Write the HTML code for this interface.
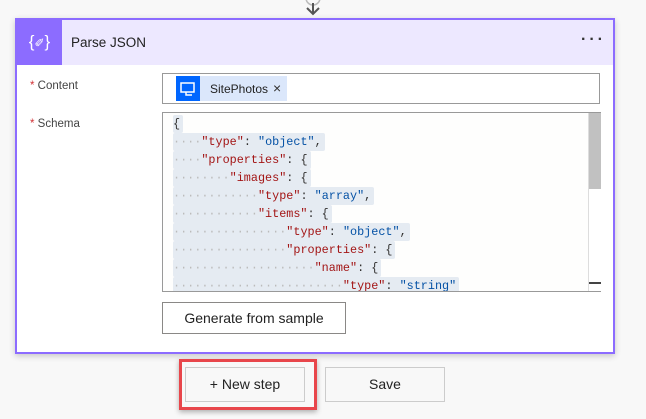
<!DOCTYPE html>
<html><head><style>
*{margin:0;padding:0;box-sizing:border-box}
body{width:646px;height:419px;background:#f8f8f8;font-family:"Liberation Sans",sans-serif;position:relative;overflow:hidden;color:#323130}
.card{position:absolute;left:15px;top:18px;width:600px;height:336px;border:2px solid #8c6cff;background:#fff;box-shadow:0 2px 6px rgba(0,0,0,.2)}
.hdr{position:absolute;left:0;top:0;width:596px;height:45px;background:#ede8ff}
.ic{position:absolute;left:0;top:0;width:45px;height:45px;background:#8c6cff;color:#fff;font-size:17px;text-align:center;line-height:44px}
.title{position:absolute;left:54px;top:15px;font-size:13.5px;color:#222}
.dots{position:absolute;left:564px;top:11px;font-size:16px;font-weight:bold;letter-spacing:3px;color:#333}
.lbl{position:absolute;font-size:11.5px;color:#444}
.lbl b{color:#d13438;font-weight:normal}
.inp{position:absolute;left:145px;top:53px;width:438px;height:31px;border:1px solid #999}
.chip{position:absolute;left:13px;top:2px;width:111px;height:25px;background:#dbe7fb;font-size:12px}
.chip .bi{position:absolute;left:0;top:0;width:24px;height:25px;background:#0066ff}
.chip span{position:absolute;left:34px;top:6px;color:#222}
.chip i{position:absolute;left:97px;top:4px;font-style:normal;font-size:14px}
.code{position:absolute;left:145px;top:92px;width:439px;height:180px;border:1px solid #999;border-right:none;background:#fefefd;overflow:hidden;font-family:"Liberation Mono",monospace;font-size:11.8px}
.ln{height:18px;line-height:18px;white-space:pre;padding-left:10px}
.ln span.h{background:#e5ebf2;display:inline-block;border-radius:2px;padding-right:3px}
.d{color:#bbb}.k{color:#a31515}.s{color:#0451a5}
.sb{position:absolute;right:0;top:0;width:13px;height:180px;border-left:1px solid #ddd;background:#fff}
.sb div{height:76px;background:#c1c1c1}
.btn{position:absolute;border:1px solid #8a8886;background:#fff;font-size:14px;text-align:center;color:#222}
</style></head><body>
<svg style="position:absolute;left:303px;top:0" width="20" height="17"><circle cx="10" cy="-2" r="7" fill="none" stroke="#bbb" stroke-width="1.5"/><path d="M10 3V14M4 8L10 14L16 8" stroke="#555" stroke-width="2" fill="none"/></svg>
<div class="card">
<div class="hdr"><div class="ic">{<span style="font-size:12px">✐</span>}</div><div class="title">Parse JSON</div><div class="dots">···</div></div>
<div class="lbl" style="left:13px;top:60px"><b>*</b> Content</div>
<div class="lbl" style="left:13px;top:98px"><b>*</b> Schema</div>
<div class="inp"><div class="chip"><div class="bi"><svg width="24" height="25"><rect x="5" y="7" width="13" height="9" fill="none" stroke="#fff" stroke-width="1.5"/><path d="M10 16v3h6" stroke="#fff" stroke-width="1.5" fill="none"/></svg></div><span>SitePhotos</span><i>×</i></div></div>
<div class="code">
<div style="height:2px"></div>
<div class="ln"><span class="h">{</span></div>
<div class="ln"><span class="h"><span class="d">····</span><span class="k">"type"</span>: <span class="s">"object"</span>,</span></div>
<div class="ln"><span class="h"><span class="d">····</span><span class="k">"properties"</span>: {</span></div>
<div class="ln"><span class="h"><span class="d">········</span><span class="k">"images"</span>: {</span></div>
<div class="ln"><span class="h"><span class="d">············</span><span class="k">"type"</span>: <span class="s">"array"</span>,</span></div>
<div class="ln"><span class="h"><span class="d">············</span><span class="k">"items"</span>: {</span></div>
<div class="ln"><span class="h"><span class="d">················</span><span class="k">"type"</span>: <span class="s">"object"</span>,</span></div>
<div class="ln"><span class="h"><span class="d">················</span><span class="k">"properties"</span>: {</span></div>
<div class="ln"><span class="h"><span class="d">····················</span><span class="k">"name"</span>: {</span></div>
<div class="ln"><span class="h"><span class="d">························</span><span class="k">"type"</span>: <span class="s">"string"</span></span></div>
<div class="sb"><div></div><div style="position:absolute;left:0;top:169px;width:12px;height:2px;background:#444"></div></div>
</div>
<div class="btn" style="left:145px;top:282px;width:184px;height:32px;line-height:30px;border-color:#8a8886">Generate from sample</div>
</div>
<div style="position:absolute;left:179px;top:359px;width:138px;height:51px;border:3px solid #e8464b;box-shadow:0 2px 5px rgba(0,0,0,.3)"></div>
<div class="btn" style="left:185px;top:367px;width:120px;height:35px;line-height:33px;border-color:#ccc;background:#f8f8f8">+ New step</div>
<div class="btn" style="left:325px;top:367px;width:120px;height:35px;line-height:33px;border-color:#ccc;background:#f8f8f8">Save</div>
</body></html>
